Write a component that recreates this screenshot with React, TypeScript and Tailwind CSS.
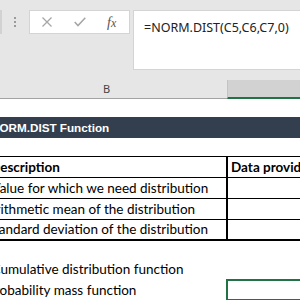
import React from "react";

const body = { fontFamily: "Lato, 'Open Sans', sans-serif" };

export default function App() {
  return (
    <div className="w-[300px] h-[300px] overflow-hidden bg-white relative">
      {/* formula toolbar */}
      <div className="h-[80px] bg-[#e6e6e6] flex items-start pt-[10px]">
        <div className="w-[2px] h-[24px] bg-[#d2d2d2] shrink-0" />
        <div className="ml-[12px] mt-[7px] flex flex-col gap-[2px] shrink-0">
          <div className="w-[2px] h-[2px] bg-[#9a9a9a]" />
          <div className="w-[2px] h-[2px] bg-[#9a9a9a]" />
          <div className="w-[2px] h-[2px] bg-[#9a9a9a]" />
        </div>
        <div className="ml-[13px] w-[101px] h-[24px] bg-white border border-[#d4d4d4] flex items-center shrink-0">
          <svg className="ml-[12px]" width="10" height="10" viewBox="0 0 10 10">
            <path d="M0.5 0.5 L9.5 9.5 M9.5 0.5 L0.5 9.5" stroke="#a6a6a6" strokeWidth="1.3" fill="none" />
          </svg>
          <svg className="ml-[22px]" width="12" height="10" viewBox="0 0 12 10">
            <path d="M0.7 5 L4 8.6 L11.3 0.8" stroke="#a6a6a6" strokeWidth="1.5" fill="none" />
          </svg>
          <span
            className="ml-[21px] mt-[2px] text-[14px] italic leading-none text-[#555]"
            style={{ fontFamily: "'Liberation Serif', serif" }}
          >
            f<span className="text-[12px]">x</span>
          </span>
        </div>
        <div
          className="ml-[3px] w-[200px] h-[60px] bg-white border border-[#d4d4d4] shrink-0 pl-[10px] pt-[9px] text-[12.5px] leading-[16px] text-[#222]"
          style={{ fontFamily: "'Noto Sans', sans-serif" }}
        >
          =NORM.DIST(C5,C6,C7,0)
        </div>
      </div>

      {/* column headers */}
      <div className="h-[19px] flex bg-[#e6e6e6]">
        <div className="w-[227px] shrink-0 border-b border-[#a3a3a3] flex items-center pl-[103px] text-[11px] text-[#444]" style={{ fontFamily: "'Noto Sans', sans-serif" }}>
          B
        </div>
        <div className="w-[80px] shrink-0 bg-[#d2d2d2] border-b-2 border-[#217346] border-l border-l-[#c4c4c4]" />
      </div>

      {/* sheet */}
      <div className="h-[18px]" />
      <div className="h-[21px] bg-[#333f4f] flex items-center">
        <span
          className="-ml-[9px] whitespace-nowrap text-white font-bold text-[11.7px]"
          style={{ fontFamily: "'Liberation Sans', Arial, sans-serif" }}
        >
          NORM.DIST Function
        </span>
      </div>
      <div className="h-[18px]" />

      <div className="border-t border-black text-[13.5px] text-black" style={body}>
        <div className="h-[21px] flex border-b border-black">
          <div className="w-[228px] shrink-0 border-r-2 border-black flex items-center">
            <span className="-ml-[10px] whitespace-nowrap font-bold">Description</span>
          </div>
          <div className="flex items-center pl-[3px] font-bold whitespace-nowrap">Data provided</div>
        </div>
        <div className="h-[21px] flex border-b border-black">
          <div className="w-[228px] shrink-0 border-r-2 border-black flex items-center">
            <span className="-ml-[8.5px] whitespace-nowrap">Value for which we need distribution</span>
          </div>
        </div>
        <div className="h-[21px] flex border-b border-black">
          <div className="w-[228px] shrink-0 border-r-2 border-black flex items-center">
            <span className="-ml-[13.5px] whitespace-nowrap">Arithmetic mean of the distribution</span>
          </div>
        </div>
        <div className="h-[21px] flex border-b-2 border-black">
          <div className="w-[228px] shrink-0 border-r-2 border-black flex items-center">
            <span className="-ml-[13px] whitespace-nowrap">Standard deviation of the distribution</span>
          </div>
        </div>
      </div>

      <div className="h-[19px]" />
      <div className="h-[19px] flex items-center text-[13.5px]" style={body}>
        <span className="-ml-[8.5px] whitespace-nowrap">Cumulative distribution function</span>
      </div>
      <div className="h-[22px] flex text-[13.5px]" style={body}>
        <div className="w-[226px] shrink-0 flex items-center">
          <span className="-ml-[13px] whitespace-nowrap">Probability mass function</span>
        </div>
        <div className="w-[80px] shrink-0 h-[22px] border-2 border-[#217346]" />
      </div>
    </div>
  );
}
